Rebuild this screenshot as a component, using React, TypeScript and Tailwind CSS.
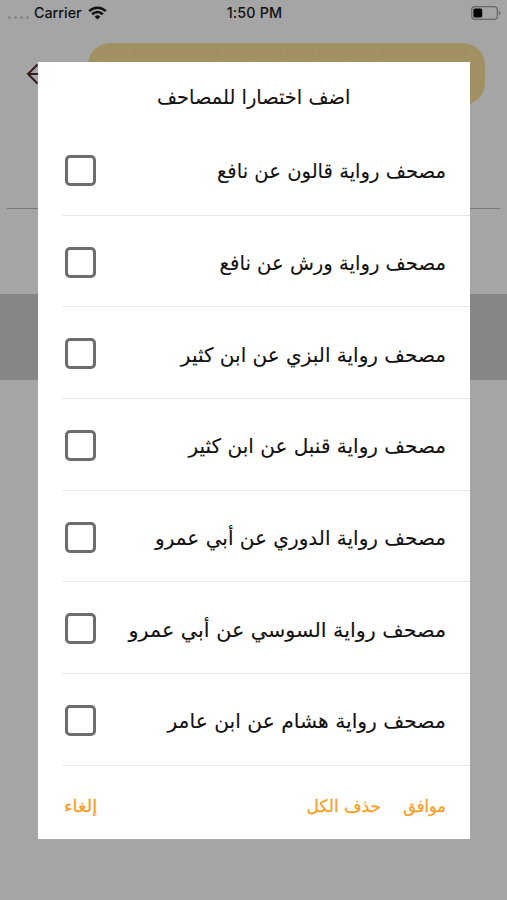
const rows = [
  { label: 'مصحف رواية قالون عن نافع', fit: 'scale-x-[0.979]' },
  { label: 'مصحف رواية ورش عن نافع', fit: 'scale-x-[0.98]' },
  { label: 'مصحف رواية البزي عن ابن كثير', fit: 'scale-x-100' },
  { label: 'مصحف رواية قنبل عن ابن كثير', fit: 'scale-x-100' },
  { label: 'مصحف رواية الدوري عن أبي عمرو', fit: 'scale-x-100' },
  { label: 'مصحف رواية السوسي عن أبي عمرو', fit: 'scale-x-[1.034]' },
  { label: 'مصحف رواية هشام عن ابن عامر', fit: 'scale-x-[1.013]' },
];

function StatusBar() {
  return (
    <div className="grid h-[26px] grid-cols-3 items-center pr-[6px] pl-2 text-[14.3px] font-medium text-[#111] [font-family:Inter,sans-serif]">
      <div className="flex items-center">
        <div className="mt-2 mr-[5px] flex gap-[3px]">
          {[0, 1, 2, 3].map((i) => (
            <span key={i} className="size-[3px] rounded-full bg-[#858585]" />
          ))}
        </div>
        <span>Carrier</span>
        <svg className="ml-[6px]" width="19" height="14" viewBox="0 0 19 14" fill="none" stroke="#111" strokeWidth="2.6">
          <path d="M1.2 5.1a11.8 11.8 0 0 1 16.6 0" />
          <path d="M4.2 8.2a7.6 7.6 0 0 1 10.6 0" />
          <path d="M9.5 13.6 6.6 10.7a4.2 4.2 0 0 1 5.8 0Z" fill="#111" stroke="none" />
        </svg>
      </div>
      <span className="text-center tracking-[0.15px]">1:50 PM</span>
      <svg className="justify-self-end" width="30" height="14" viewBox="0 0 30 14">
        <rect x="0.7" y="0.7" width="25.6" height="12.6" rx="3.4" fill="none" stroke="#666" strokeWidth="1.2" />
        <rect x="2.4" y="2.4" width="8.8" height="9.2" rx="1.6" fill="#000" />
        <path d="M27.8 5v4q1.7-.7 1.7-2t-1.7-2" fill="#666" />
      </svg>
    </div>
  );
}

export default function App() {
  return (
    <div className="relative h-[900px] w-[507px] overflow-hidden bg-[#a5a5a5]">
      <StatusBar />
      <div className="mt-[17px] flex h-[62px] items-center pr-[22px] pl-[26px]">
        <svg className="mr-[42px]" width="20" height="22" viewBox="0 0 20 22" fill="none" stroke="#381a1c" strokeWidth="2">
          <path d="M11.5 1.5 2 11l9.5 9.5M2 11h18" />
        </svg>
        <div className="h-full flex-1 rounded-[22px] bg-[#a19062] bg-[repeating-linear-gradient(90deg,#8b795010_0_2px,transparent_2px_9px,#b5a16d18_9px_12px,transparent_12px_31px)]" />
      </div>
      <div className="mx-[7px] mt-[103px] h-px bg-[#777]" />
      <div className="mt-[85px] h-[86px] bg-[#868688]" />

      <div className="absolute top-[62px] left-[37.5px] flex h-[776.5px] w-[432.5px] flex-col bg-white [font-family:'DejaVu_Sans',sans-serif]" dir="rtl">
        <h1 className="flex h-[62px] items-center justify-center pt-[7px] text-[20px] leading-none text-[#111]">
          <span className="scale-x-[0.97] [-webkit-text-stroke:0.1px_#111]">اضف اختصارا للمصاحف</span>
        </h1>
        <ul>
          {rows.map(({ label, fit }) => (
            <li key={label} className="ml-[24px] flex h-[91.7px] items-center justify-between border-b border-[#e8e8e8] pt-[2px] pr-[24px] pl-[3px]">
              <span className={`origin-right pt-[2px] text-[20px] leading-none whitespace-nowrap text-[#111] [-webkit-text-stroke:0.1px_#111] ${fit}`}>{label}</span>
              <span className="size-[31px] shrink-0 rounded-[5px] border-3 border-[#6e6c6c]" />
            </li>
          ))}
        </ul>
        <div className="flex flex-1 items-center pt-[8px] pr-[24px] pl-[26px] text-[17px] leading-none text-[#f7a028] [-webkit-text-stroke:0.3px_#f7a028]">
          <button className="origin-right scale-x-[0.95]">موافق</button>
          <button className="mr-[20px]">حذف الكل</button>
          <button className="mr-auto origin-left scale-x-[1.06]">إلغاء</button>
        </div>
      </div>
    </div>
  );
}
